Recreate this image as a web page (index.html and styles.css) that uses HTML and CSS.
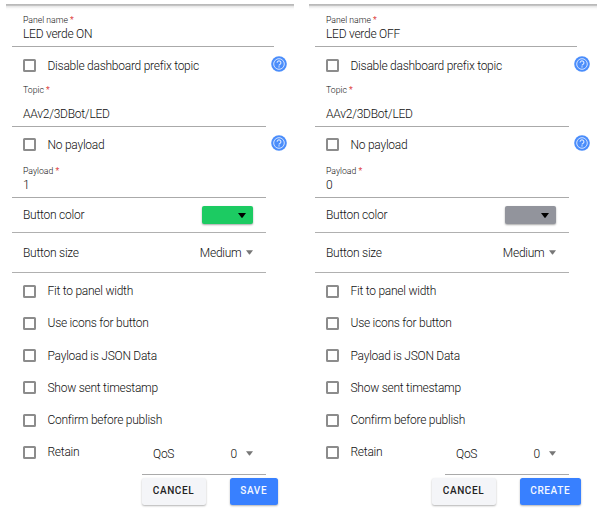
FILE: index.html
```
<!DOCTYPE html>
<html lang="en">
<head>
<meta charset="utf-8">
<title>Button panels</title>
<link rel="stylesheet" href="styles.css">
</head>
<body>
<svg class="defs" aria-hidden="true">
  <symbol id="help" viewBox="0 0 16 16">
    <circle cx="8" cy="8" r="7.8" fill="#4a8dfb"/>
    <circle cx="8" cy="8" r="5.3" fill="none" stroke="#d5e4ff" stroke-width="1"/>
    <path d="M6.1 6.8a1.9 1.9 0 1 1 2.9 1.6q-1 .6-1 1.2M8 10.2v1.2" fill="none" stroke="#e4eeff" stroke-width="1.1"/>
  </symbol>
  <symbol id="caret" viewBox="0 0 8 5"><path d="M0 0h8L4.6 4.6q-.6.6-1.2 0z" fill="currentColor"/></symbol>
</svg>
<main class="panels">
  <form class="panel">
    <div class="field name"><label class="label">Panel name <b class="req">*</b></label><span class="value">LED verde ON</span></div>
    <div class="check first"><i class="box"></i><span class="long">Disable dashboard prefix topic</span><svg class="help"><use href="#help"/></svg></div>
    <div class="field topic"><label class="label">Topic <b class="req">*</b></label><span class="value">AAv2/3DBot/LED</span></div>
    <div class="check second"><i class="box"></i><span>No payload</span><svg class="help"><use href="#help"/></svg></div>
    <div class="field payload"><label class="label">Payload <b class="req">*</b></label><span class="value">1</span></div>
    <div class="select color"><span>Button color</span><span class="swatch green"><svg class="caret"><use href="#caret"/></svg></span></div>
    <div class="select size"><span>Button size</span><span class="choice">Medium<svg class="caret"><use href="#caret"/></svg></span></div>
    <div class="options">
      <div class="check"><i class="box"></i><span>Fit to panel width</span></div>
      <div class="check"><i class="box"></i><span>Use icons for button</span></div>
      <div class="check"><i class="box"></i><span>Payload is JSON Data</span></div>
      <div class="check"><i class="box"></i><span>Show sent timestamp</span></div>
      <div class="check"><i class="box"></i><span>Confirm before publish</span></div>
      <div class="check"><i class="box"></i><span>Retain</span>
        <div class="qos"><span>QoS</span><span class="choice">0<svg class="caret"><use href="#caret"/></svg></span></div>
      </div>
    </div>
    <div class="actions"><span class="btn cancel">CANCEL</span><span class="btn save">SAVE</span></div>
  </form>
  <form class="panel">
    <div class="field name"><label class="label">Panel name <b class="req">*</b></label><span class="value">LED verde OFF</span></div>
    <div class="check first"><i class="box"></i><span class="long">Disable dashboard prefix topic</span><svg class="help"><use href="#help"/></svg></div>
    <div class="field topic"><label class="label">Topic <b class="req">*</b></label><span class="value">AAv2/3DBot/LED</span></div>
    <div class="check second"><i class="box"></i><span>No payload</span><svg class="help"><use href="#help"/></svg></div>
    <div class="field payload"><label class="label">Payload <b class="req">*</b></label><span class="value">0</span></div>
    <div class="select color"><span>Button color</span><span class="swatch gray"><svg class="caret"><use href="#caret"/></svg></span></div>
    <div class="select size"><span>Button size</span><span class="choice">Medium<svg class="caret"><use href="#caret"/></svg></span></div>
    <div class="options">
      <div class="check"><i class="box"></i><span>Fit to panel width</span></div>
      <div class="check"><i class="box"></i><span>Use icons for button</span></div>
      <div class="check"><i class="box"></i><span>Payload is JSON Data</span></div>
      <div class="check"><i class="box"></i><span>Show sent timestamp</span></div>
      <div class="check"><i class="box"></i><span>Confirm before publish</span></div>
      <div class="check"><i class="box"></i><span>Retain</span>
        <div class="qos"><span>QoS</span><span class="choice">0<svg class="caret"><use href="#caret"/></svg></span></div>
      </div>
    </div>
    <div class="actions"><span class="btn cancel">CANCEL</span><span class="btn create">CREATE</span></div>
  </form>
</main>
</body>
</html>
```
FILE: styles.css
```
* { box-sizing: border-box; }
body {
  margin: 0;
  background: #fff;
  color: #111;
  font: 300 12px/14px Roboto, "Liberation Sans", sans-serif;
  letter-spacing: -0.25px;
}
.defs { display: none; }
.panels {
  display: flex;
  gap: 15.5px;
  padding: 4px 0 0 6px;
  height: 509px;
  overflow: hidden;
}
.panel {
  width: 287.5px;
  height: 505px;
  padding: 0 0 0 6px;
  background: linear-gradient(#b4b4b4, #c4c4c4 1.5px, #e8e8e8 2.5px, #fafafa 4.5px, #fff 6px);
}
.field {
  display: flex;
  flex-direction: column;
  width: 254px;
  padding-left: 11px;
  border-bottom: 1px solid #aaa;
}
.label { font-size: 8.7px; line-height: 10px; letter-spacing: 0; }
.req { color: #e04848; font-weight: 400; }
.name { width: 262px; height: 43px; padding-top: 11px; }
.name .value { margin-top: 2px; }
.topic { height: 44px; padding-top: 2px; }
.topic .value { margin-top: 12px; }
.payload { height: 36px; padding-top: 4px; }
.payload .value { margin-top: 2px; }
.check {
  display: flex;
  align-items: center;
  height: 32.25px;
  padding-left: 11px;
}
.box {
  width: 13px;
  height: 13px;
  margin-right: 11.5px;
  border: 2px solid #8c8c8c;
  border-radius: 1.5px;
}
.first { height: 36px; padding-top: 1px; }
.second { height: 35px; }
.help { width: 16px; height: 16px; margin: 0 6.5px 4px auto; }
.select {
  display: flex;
  justify-content: space-between;
  align-items: center;
  width: 254px;
  padding: 0 13.5px 0 11px;
  border-bottom: 1px solid #b0b0b0;
}
.color { height: 35px; }
.size { height: 40px; }
.caret { width: 8px; height: 5px; }
.swatch {
  display: flex;
  align-items: center;
  justify-content: flex-end;
  width: 50.5px;
  height: 18px;
  padding-right: 7px;
  border-radius: 2px;
  color: #000;
  box-shadow: 0 1px 2px rgba(0,0,0,.35);
}
.green { background: #1ccb62; }
.gray { background: #92949c; }
.choice { display: flex; align-items: center; gap: 4px; }
.choice .caret { width: 7px; color: #777; }
.options { padding-top: 2px; }
.qos {
  display: flex;
  justify-content: space-between;
  align-items: center;
  width: 124px;
  height: 42px;
  margin: 4px 27.5px 0 auto;
  padding: 0 13px 0 11px;
  border-bottom: 1px solid #aaa;
}
.qos .choice { gap: 9px; }
.actions {
  display: flex;
  justify-content: flex-end;
  gap: 24px;
  margin: 9.5px 15.5px 0 0;
}
.btn {
  height: 26.5px;
  border-radius: 2.5px;
  font-size: 10px;
  font-weight: 500;
  line-height: 26px;
  letter-spacing: 0.6px;
  text-align: center;
  color: #f4f8ff;
  background: #3880ff;
  box-shadow: 0 1px 2px rgba(0,0,0,.3);
}
.cancel { width: 64px; color: #222; background: #f4f5f8; }
.save { width: 48.5px; }
.create { width: 61.5px; }
```
